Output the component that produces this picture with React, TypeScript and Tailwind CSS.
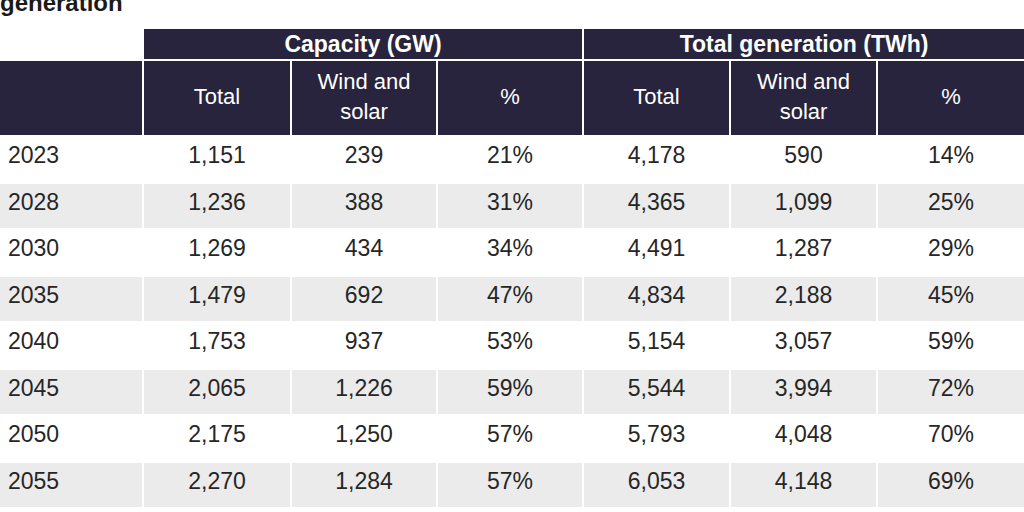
import React from 'react';

const rows = [
  ['2023', '1,151', '239', '21%', '4,178', '590', '14%'],
  ['2028', '1,236', '388', '31%', '4,365', '1,099', '25%'],
  ['2030', '1,269', '434', '34%', '4,491', '1,287', '29%'],
  ['2035', '1,479', '692', '47%', '4,834', '2,188', '45%'],
  ['2040', '1,753', '937', '53%', '5,154', '3,057', '59%'],
  ['2045', '2,065', '1,226', '59%', '5,544', '3,994', '72%'],
  ['2050', '2,175', '1,250', '57%', '5,793', '4,048', '70%'],
  ['2055', '2,270', '1,284', '57%', '6,053', '4,148', '69%'],
];

const subHeads = ['Total', 'Wind and solar', '%', 'Total', 'Wind and solar', '%'];

const App = () => {
  return (
    <div className="w-[1024px] h-[512px] overflow-hidden bg-white font-['Liberation_Sans',Arial,sans-serif]">
      <div className="h-[29px] overflow-hidden">
        <div className="-mt-[9px] text-[24px] leading-none font-bold text-[#1a1a1a]">generation</div>
      </div>

      <div className="grid grid-cols-[142px_146px_144px_144px_145px_145px_1fr] gap-x-[2px] gap-y-[2px] grid-rows-[30px_74px]">
        <div />
        <div className="col-span-3 bg-[#29243d] text-white font-bold text-[23px] flex items-center justify-center">
          Capacity (GW)
        </div>
        <div className="col-span-3 bg-[#29243d] text-white font-bold text-[23px] flex items-center justify-center">
          Total generation (TWh)
        </div>

        <div className="bg-[#29243d]" />
        {subHeads.map((h, i) => (
          <div
            key={i}
            className="bg-[#29243d] text-white text-[22px] leading-[30px] flex items-center justify-center text-center px-4 pb-[3px]"
          >
            {h}
          </div>
        ))}

        {rows.map((r, ri) =>
          r.map((cell, ci) => (
            <div
              key={`${ri}-${ci}`}
              className={`h-[44.5px] flex items-center pb-[8px] text-[23px] text-[#262626] ${
                ri % 2 === 1 ? 'bg-[#ebebeb]' : 'bg-white'
              } ${ci === 0 ? 'justify-start pl-2' : 'justify-center'}`}
            >
              {cell}
            </div>
          ))
        )}
      </div>
    </div>
  );
};

export default App;
